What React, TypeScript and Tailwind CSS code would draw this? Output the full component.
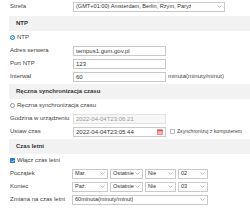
import React from "react";

const Chevron = () => (
  <svg width="5" height="3" viewBox="0 0 5 3" className="shrink-0">
    <path d="M0.5 0.4 L2.5 2.4 L4.5 0.4" stroke="#8a8a8a" fill="none" strokeWidth="0.6" />
  </svg>
);

function Select({ value, w }: { value: string; w: string }) {
  return (
    <div
      className={`flex h-[10px] items-center justify-between gap-[1px] overflow-hidden whitespace-nowrap border border-[#c9c9c9] bg-white pl-[2px] pr-[2px] text-[5.6px] leading-none text-[#333] ${w}`}
    >
      <span className="overflow-hidden">{value}</span>
      <Chevron />
    </div>
  );
}

function Input({ value, disabled, children }: { value: string; disabled?: boolean; children?: React.ReactNode }) {
  return (
    <div
      className={`flex h-[10px] w-[93px] items-center justify-between whitespace-nowrap border px-[2px] text-[6px] leading-none ${
        disabled ? "border-[#e3e3e3] bg-[#f7f7f7] text-[#9a9a9a]" : "border-[#c9c9c9] bg-white text-[#333]"
      }`}
    >
      <span>{value}</span>
      {children}
    </div>
  );
}

function Row({ label, children }: { label?: string; children: React.ReactNode }) {
  return (
    <div className="flex h-[13px] items-center whitespace-nowrap">
      {label !== undefined && <div className="w-[63px] shrink-0 text-[6px] text-[#444]">{label}</div>}
      {children}
    </div>
  );
}

function Band({ title, first }: { title: string; first?: boolean }) {
  return (
    <div
      className={`${first ? "mt-[3px]" : "mt-[1px]"} flex h-[15px] items-center bg-[#f2f2f2] pl-[7px] text-[6px] font-bold text-[#333]`}
    >
      {title}
    </div>
  );
}

const Calendar = () => (
  <svg width="6" height="6" viewBox="0 0 6 6" className="shrink-0">
    <rect x="0.3" y="0.8" width="5.4" height="4.9" fill="#f4b4b4" stroke="#d9534f" strokeWidth="0.5" />
    <rect x="0.3" y="0.8" width="5.4" height="1.4" fill="#d9534f" />
  </svg>
);

export default function App() {
  return (
    <div className="h-[217px] w-[250px] overflow-hidden bg-white font-['Liberation_Sans',Arial,sans-serif]">
      <div className="pl-[10px]">
        <Row label="Strefa">
          <Select value="(GMT+01:00) Amsterdam, Berlin, Rzym, Paryż" w="w-[152px]" />
        </Row>
      </div>
      <div className="pl-[9px]">
        <Band title="NTP" first />
      </div>
      <div className="pl-[10px]">
        <Row>
          <span className="mr-[2px] inline-block h-[5px] w-[5px] rounded-full border border-[#2a8be8] bg-[#2a8be8] shadow-[inset_0_0_0_1px_white]" />
          <span className="text-[6px] text-[#444]">NTP</span>
        </Row>
        <Row label="Adres serwera">
          <Input value="tempus1.gum.gov.pl" />
        </Row>
        <Row label="Port NTP">
          <Input value="123" />
        </Row>
        <Row label="Interwał">
          <Input value="60" />
          <span className="ml-[2px] text-[6px] text-[#444]">minuta(minuty/minut)</span>
        </Row>
      </div>
      <div className="pl-[9px]">
        <Band title="Ręczna synchronizacja czasu" />
      </div>
      <div className="pl-[10px]">
        <Row>
          <span className="mr-[2px] inline-block h-[5px] w-[5px] rounded-full border border-[#9a9a9a] bg-white" />
          <span className="text-[6px] text-[#444]">Ręczna synchronizacja czasu</span>
        </Row>
        <Row label="Godzina w urządzeniu">
          <Input value="2022-04-04T23:06:21" disabled />
        </Row>
        <Row label="Ustaw czas">
          <Input value="2022-04-04T23:05:44">
            <Calendar />
          </Input>
          <span className="ml-[4px] mr-[2px] inline-block h-[5px] w-[5px] shrink-0 border border-[#bdbdbd] bg-white" />
          <span className="text-[5.1px] text-[#444]">Zsynchronizuj z komputerem</span>
        </Row>
      </div>
      <div className="pl-[9px]">
        <Band title="Czas letni" />
      </div>
      <div className="pl-[10px]">
        <Row>
          <span className="mr-[2px] flex h-[5px] w-[5px] items-center justify-center bg-[#2a7fd4]">
            <svg width="4" height="4" viewBox="0 0 4 4">
              <path d="M0.6 2 L1.6 3 L3.4 1" stroke="white" fill="none" strokeWidth="0.7" />
            </svg>
          </span>
          <span className="text-[6px] text-[#444]">Włącz czas letni</span>
        </Row>
        <Row label="Początek">
          <div className="ml-[-1px] flex gap-[2px]">
            <Select value="Mar." w="w-[36px]" />
            <Select value="Ostatnie" w="w-[33px]" />
            <Select value="Nie" w="w-[31px]" />
            <Select value="02" w="w-[30px]" />
          </div>
        </Row>
        <Row label="Koniec">
          <div className="ml-[-1px] flex gap-[2px]">
            <Select value="Paź." w="w-[36px]" />
            <Select value="Ostatnie" w="w-[33px]" />
            <Select value="Nie" w="w-[31px]" />
            <Select value="03" w="w-[30px]" />
          </div>
        </Row>
        <Row label="Zmiana na czas letni">
          <div className="ml-[-1px]">
            <Select value="60minuta(minuty/minut)" w="w-[136px]" />
          </div>
        </Row>
      </div>
    </div>
  );
}
